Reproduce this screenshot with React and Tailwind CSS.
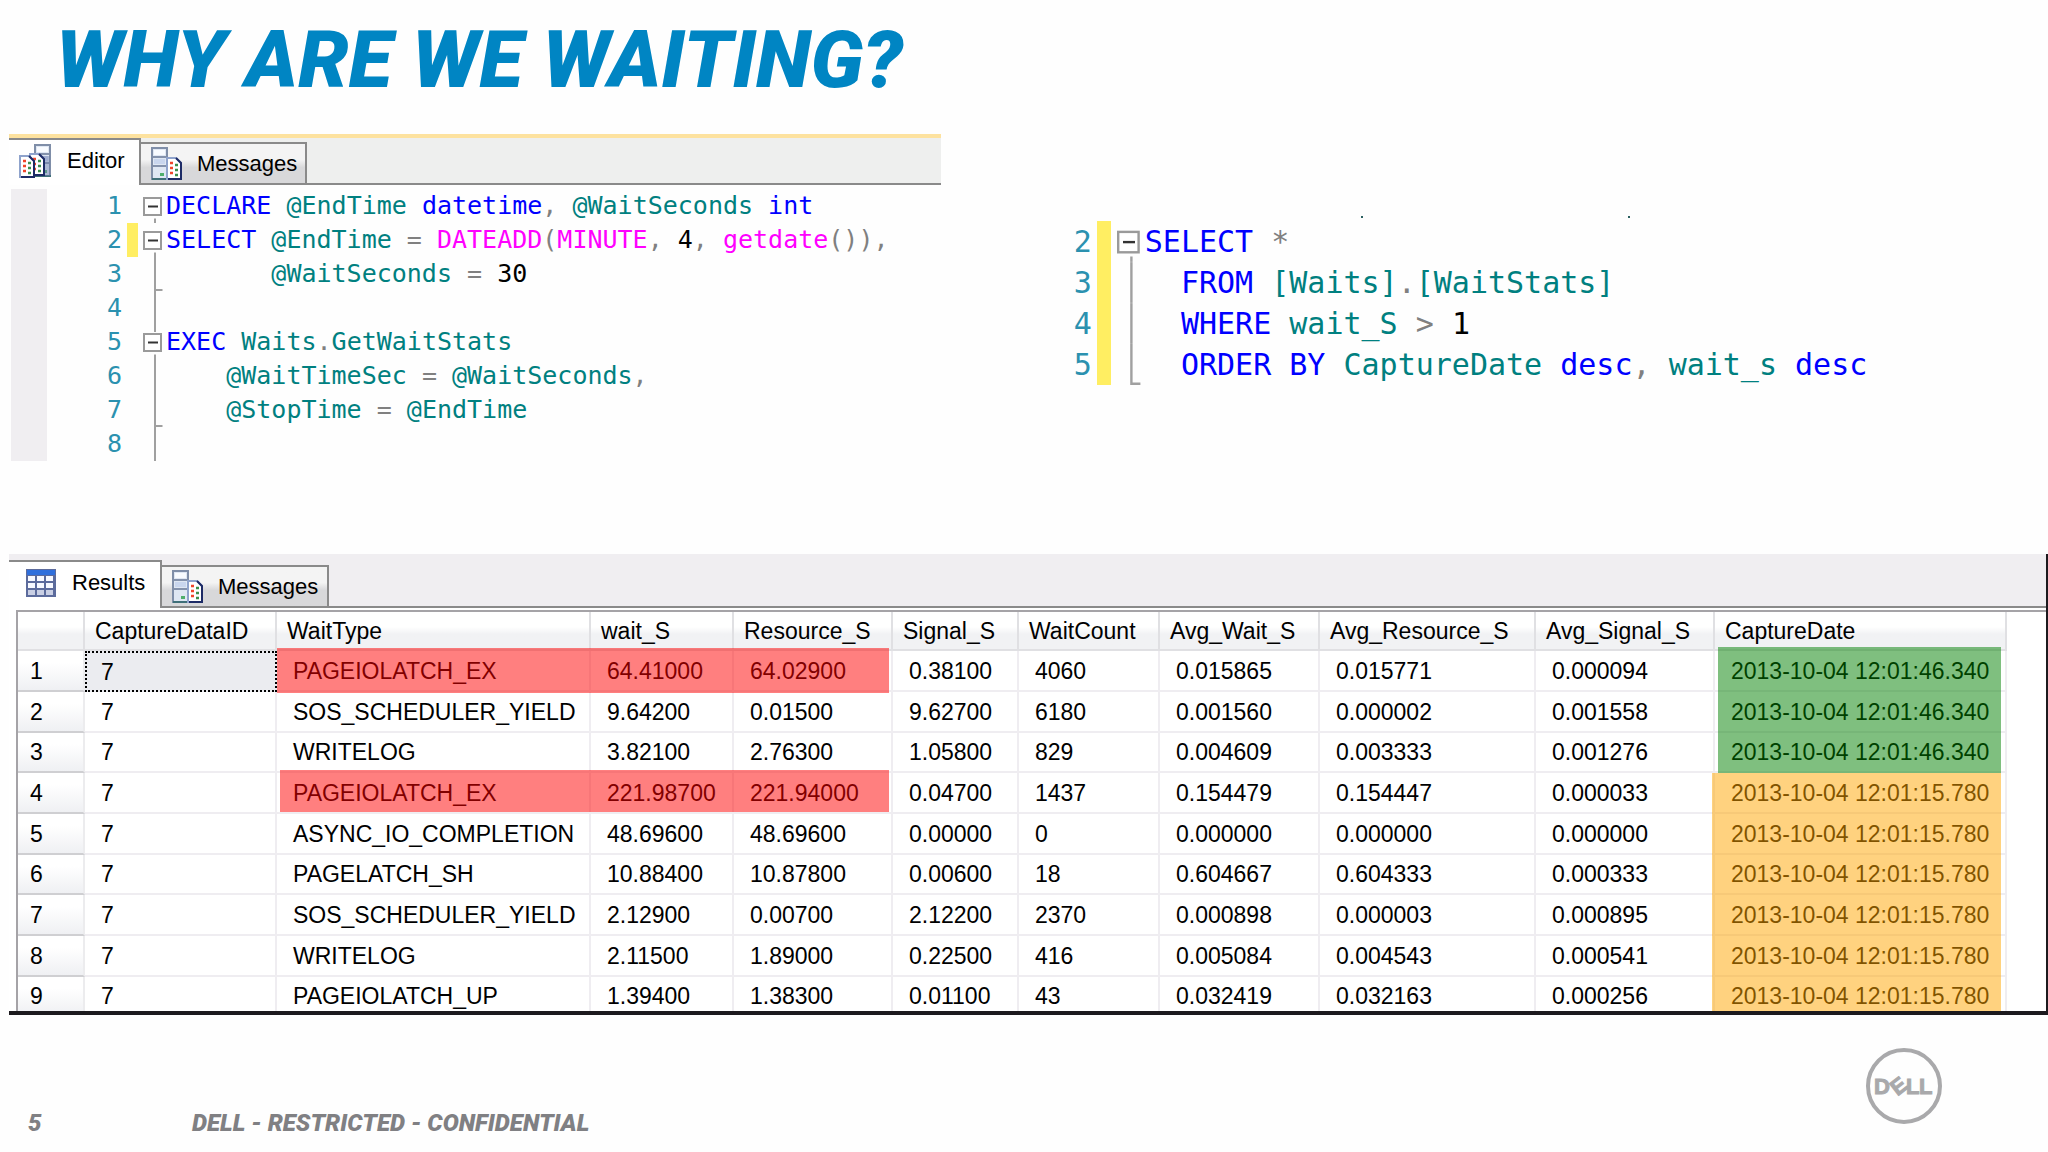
import React from 'react';
import clsx from 'clsx';

// token colours used by the SQL editor
const kw = 'text-[#0000ff]';
const id = 'text-[#008080]';
const fn = 'text-[#ff00ff]';
const op = 'text-[#808080]';
const num = 'text-black';

const waitScript = [
  { no: 1, fold: 'open', code: [[kw, 'DECLARE '], [id, '@EndTime '], [kw, 'datetime'], [op, ', '], [id, '@WaitSeconds '], [kw, 'int']] },
  { no: 2, fold: 'open', changed: true, code: [[kw, 'SELECT '], [id, '@EndTime '], [op, '= '], [fn, 'DATEADD'], [op, '('], [fn, 'MINUTE'], [op, ', '], [num, '4'], [op, ', '], [fn, 'getdate'], [op, '()),']] },
  { no: 3, fold: 'tick', code: [[id, '       @WaitSeconds '], [op, '= '], [num, '30']] },
  { no: 4, fold: 'line', code: [] },
  { no: 5, fold: 'nested', code: [[kw, 'EXEC '], [id, 'Waits'], [op, '.'], [id, 'GetWaitStats']] },
  { no: 6, fold: 'line', code: [[id, '    @WaitTimeSec '], [op, '= '], [id, '@WaitSeconds'], [op, ',']] },
  { no: 7, fold: 'tick', code: [[id, '    @StopTime '], [op, '= '], [id, '@EndTime']] },
  { no: 8, fold: 'line', code: [] },
];

const waitQuery = [
  { no: 2, fold: 'open', changed: true, code: [[kw, 'SELECT '], [op, '*']] },
  { no: 3, fold: 'line', changed: true, code: [[kw, '  FROM '], [id, '[Waits]'], [op, '.'], [id, '[WaitStats]']] },
  { no: 4, fold: 'line', changed: true, code: [[kw, '  WHERE '], [id, 'wait_S '], [op, '> '], [num, '1']] },
  { no: 5, fold: 'tick', changed: true, code: [[kw, '  ORDER BY '], [id, 'CaptureDate '], [kw, 'desc'], [op, ', '], [id, 'wait_s '], [kw, 'desc']] },
];

const columns = [
  'CaptureDataID', 'WaitType', 'wait_S', 'Resource_S', 'Signal_S', 'WaitCount',
  'Avg_Wait_S', 'Avg_Resource_S', 'Avg_Signal_S', 'CaptureDate',
];

const late = '2013-10-04 12:01:46.340';
const early = '2013-10-04 12:01:15.780';

const rows = [
  ['7', 'PAGEIOLATCH_EX', '64.41000', '64.02900', '0.38100', '4060', '0.015865', '0.015771', '0.000094', late],
  ['7', 'SOS_SCHEDULER_YIELD', '9.64200', '0.01500', '9.62700', '6180', '0.001560', '0.000002', '0.001558', late],
  ['7', 'WRITELOG', '3.82100', '2.76300', '1.05800', '829', '0.004609', '0.003333', '0.001276', late],
  ['7', 'PAGEIOLATCH_EX', '221.98700', '221.94000', '0.04700', '1437', '0.154479', '0.154447', '0.000033', early],
  ['7', 'ASYNC_IO_COMPLETION', '48.69600', '48.69600', '0.00000', '0', '0.000000', '0.000000', '0.000000', early],
  ['7', 'PAGELATCH_SH', '10.88400', '10.87800', '0.00600', '18', '0.604667', '0.604333', '0.000333', early],
  ['7', 'SOS_SCHEDULER_YIELD', '2.12900', '0.00700', '2.12200', '2370', '0.000898', '0.000003', '0.000895', early],
  ['7', 'WRITELOG', '2.11500', '1.89000', '0.22500', '416', '0.005084', '0.004543', '0.000541', early],
  ['7', 'PAGEIOLATCH_UP', '1.39400', '1.38300', '0.01100', '43', '0.032419', '0.032163', '0.000256', early],
];

const Server = () => (
  <>
    <rect x="1" y="1" width="15" height="31" fill="#dfe7f3" stroke="#7f8ea8" strokeWidth="2" />
    <rect x="3" y="3" width="11" height="5" fill="#f8fbff" />
    <path d="M2 10h13M2 19h13" stroke="#8492ac" strokeWidth="2" />
    <rect x="3" y="12" width="11" height="5" fill="#c9d6ee" />
    <rect x="9" y="26" width="4" height="3" fill="#4fae6c" />
    <path d="M1 32h16" stroke="#3f6f78" strokeWidth="2" />
  </>
);

const Sheet = () => (
  <>
    <path d="M1 1h9l5 5v16H1z" fill="#fff" stroke="#8fa3cc" strokeWidth="2" />
    <path d="M10 1l5 5v16H2" fill="none" stroke="#1d2b66" strokeWidth="2" />
    <path d="M4 6h3M4 11h3M4 16h3" stroke="#f0452a" strokeWidth="2.5" />
    <path d="M9 8h3M9 13h3M9 18h3" stroke="#3c8f4b" strokeWidth="2.5" />
  </>
);

const MessagesIcon = () => (
  <svg className="h-[34px] w-8 shrink-0" viewBox="0 0 32 34" aria-hidden="true">
    <Server />
    <g transform="translate(15 10)"><Sheet /></g>
  </svg>
);

const EditorIcon = () => (
  <svg className="h-[34px] w-8 shrink-0" viewBox="0 0 32 34" aria-hidden="true">
    <g transform="translate(15 0)"><Server /></g>
    <path d="M16 12h15v20H16z" fill="#6f7fae" opacity="0.45" />
    <g transform="translate(10 9)"><Sheet /></g>
    <g transform="translate(0 11)"><Sheet /></g>
  </svg>
);

const GridIcon = () => (
  <svg className="h-7 w-[30px] shrink-0" viewBox="0 0 30 28" aria-hidden="true">
    <rect width="30" height="28" fill="#5c6b9c" />
    <rect x="1" y="1" width="28" height="5" fill="#2f6fdc" />
    {[7, 14, 21].map((y) => [2, 11, 20].map((x) => (
      <rect key={`${x}-${y}`} x={x} y={y} width="7" height="5" fill={y === 21 ? '#c9cfe4' : '#f7f9ff'} />
    )))}
  </svg>
);

const FoldMark = ({ type, className }) => (
  <svg className={className} viewBox="0 0 20 34" aria-hidden="true">
    {type === 'open' || type === 'nested' ? (
      <>
        {type === 'nested' && <path d="M12 0V7" stroke="#a0a0a0" strokeWidth="2" />}
        <rect x="1" y="9" width="17" height="17" fill="#fff" stroke="#9a9a9a" strokeWidth="2" />
        <path d="M5 17.5h10" stroke="#333" strokeWidth="2" />
        <path d="M12 29.5V34" stroke="#a0a0a0" strokeWidth="2" />
      </>
    ) : (
      <path d={type === 'tick' ? 'M12 0V34M12 33H19.5' : 'M12 0V34'} stroke="#a0a0a0" strokeWidth="2" fill="none" />
    )}
  </svg>
);

const CodeLine = ({ line, large }) => (
  <div className={clsx('flex items-center', large ? 'h-[41px]' : 'h-[34px]')}>
    <span className={clsx('text-right text-[#2b91af]', large ? 'w-[19px]' : 'w-[75px]')}>{line.no}</span>
    <span className={clsx('h-full shrink-0', large ? 'ml-[5px] w-[14px]' : 'ml-[5px] w-[11px]', line.changed && 'bg-[#ffee62]')} />
    <FoldMark type={line.fold} className={clsx('h-full shrink-0', large ? 'ml-1.5 w-6' : 'ml-[5px] w-5')} />
    <code className={clsx('whitespace-pre font-[inherit]', large ? 'ml-1' : 'ml-[3px]')}>
      {line.code.map(([color, text], i) => (
        <span key={i} className={color}>{text}</span>
      ))}
    </code>
  </div>
);

const TabStrip = ({ icon, label, activeClass, messagesClass, stripClass }) => (
  <div className={clsx('flex font-["Liberation_Sans",sans-serif] text-[22px] leading-8', stripClass)}>
    <button className={clsx('flex items-center border-t-2 border-r-2 border-[#8a8a8a] bg-white pb-1', activeClass)}>
      {icon}
      {label}
    </button>
    <div className="flex flex-1 items-end border-b-2 border-[#8a8a8a]">
      <button className={clsx('flex h-[41px] items-center border-t-2 border-r-2 border-[#8a8a8a] bg-linear-to-b from-[#f4f4f4] from-40% to-[#d8d8da] to-60%', messagesClass)}>
        <MessagesIcon />
        Messages
      </button>
    </div>
  </div>
);

const DellLogo = () => (
  <svg className="h-[78px] w-[78px] not-italic" viewBox="0 0 78 78" role="img" aria-label="Dell">
    <circle cx="39" cy="39" r="36" fill="none" stroke="#a9a9ab" strokeWidth="4" />
    <g fill="#a9a9ab" stroke="#a9a9ab" strokeWidth="1" className='font-["Liberation_Sans",sans-serif] text-[22px] font-bold'>
      <text x="9" y="47">D</text>
      <text x="-7" y="8" transform="translate(33 39) rotate(-38)">E</text>
      <text x="41" y="47">L</text>
      <text x="54" y="47">L</text>
    </g>
  </svg>
);

export default function App() {
  return (
    <div className="flex min-h-screen flex-col bg-[#fefefe] text-black">
      <header className="h-[134px] pt-3 pl-14">
        <h1 className="font-[Roboto,sans-serif] text-[80px] leading-[96px] font-black text-[#0085c3] italic">WHY ARE WE WAITING?</h1>
      </header>

      {/* Scripts */}
      <div className="grid h-[420px] grid-cols-[457fr_543fr] pl-[9px]">
        <section>
          <div className="border-t-4 border-[#fde29f] bg-[#eeefee]">
            <TabStrip
              icon={<EditorIcon />}
              label="Editor"
              stripClass="h-[47px]"
              activeClass="w-[132px] gap-4 pl-2.5"
              messagesClass="w-[166px] gap-3.5 pl-2.5"
            />
          </div>
          <div className='mt-1 flex font-["DejaVu_Sans_Mono",monospace] text-[25px] leading-8'>
            <div className="ml-0.5 w-9 bg-[#f0eef1]" />
            <div>
              {waitScript.map((line) => <CodeLine key={line.no} line={line} />)}
            </div>
          </div>
        </section>
        <section className='pt-[82px] pl-[132px] font-["DejaVu_Sans_Mono",monospace] text-[30px] leading-10'>
          {/* tails of the clipped line above */}
          <div className="flex h-[5px] pl-[288px]">
            <span className="h-0.5 w-0.5 bg-[#2b6060]" />
            <span className="ml-[265px] h-0.5 w-0.5 bg-[#2b6060]" />
          </div>
          {waitQuery.map((line) => <CodeLine key={line.no} line={line} large />)}
        </section>
      </div>

      {/* Results */}
      <section className="ml-[9px] h-[461px] overflow-hidden border-r-2 border-b-4 border-[#1c1a1e] bg-[#f0eef1]">
        <TabStrip
          icon={<GridIcon />}
          label="Results"
          stripClass="mt-1.5 h-12"
          activeClass="w-[153px] gap-4 pl-[17px]"
          messagesClass="w-[167px] gap-3.5 pl-2.5"
        />
        <div className="bg-white pt-0.5 pl-[7px]">
          <div className='relative border-t-2 border-l-2 border-[#a5a3a7] font-["Liberation_Sans",sans-serif] text-[23px] leading-8 whitespace-nowrap'>
            <table className="w-full table-fixed border-separate border-spacing-0 text-left">
              <colgroup>
                <col className="w-[67px]" />
                <col className="w-[192px]" />
                <col className="w-[314px]" />
                <col className="w-[143px]" />
                <col className="w-[159px]" />
                <col className="w-[126px]" />
                <col className="w-[141px]" />
                <col className="w-[160px]" />
                <col className="w-[216px]" />
                <col className="w-[179px]" />
                <col className="w-[292px]" />
                <col />
              </colgroup>
              <thead>
                <tr className="h-[39px]">
                  <th className="border-r-2 border-b-2 border-[#e0e0e3] bg-linear-to-b from-white from-40% to-[#f1f2f4] to-60%" />
                  {columns.map((name) => (
                    <th key={name} className="border-r-2 border-b-2 border-[#e0e0e3] bg-linear-to-b from-white from-40% to-[#f1f2f4] to-60% p-0 pl-2.5 font-normal">{name}</th>
                  ))}
                  <th />
                </tr>
              </thead>
              <tbody>
                {rows.map((row, r) => (
                  <tr key={r} className="h-[41px] nth-[3n]:h-10">
                    <th className="border-r-2 border-b-2 border-r-[#ececee] border-b-[#cfcfd2] bg-linear-to-b from-white from-30% to-[#eff0f3] p-0 pl-3 font-normal">{r + 1}</th>
                    {row.map((cell, c) => (
                      <td
                        key={c}
                        className={clsx(
                          'p-0',
                          r === 0 && c === 0
                            ? 'border-2 border-dotted border-black bg-[#ebecf0] pl-3.5'
                            : 'border-r-2 border-b-2 border-[#efedf1] pl-4',
                        )}
                      >
                        {cell}
                      </td>
                    ))}
                    <td />
                  </tr>
                ))}
              </tbody>
            </table>

            {/* Highlighter boxes over the grid */}
            <div className="absolute top-9 left-[259px] h-[45px] w-[612px] bg-[#ff0000]/50" />
            <div className="absolute top-[158px] left-[262px] h-[42px] w-[609px] bg-[#ff0000]/50" />
            <div className="absolute top-[35px] left-[1700px] h-[126px] w-[283px] bg-[#008000]/50" />
            <div className="absolute top-[161px] left-[1694px] h-[250px] w-[289px] bg-[#ffa500]/50" />
          </div>
        </div>
      </section>

      <footer className="flex flex-1 items-start pl-7 font-[Roboto,sans-serif] text-[24px] leading-8 font-black text-[#808083] italic">
        <span className="w-[164px] pt-[92px]">5</span>
        <span className="flex-1 pt-[92px]">DELL - RESTRICTED - CONFIDENTIAL</span>
        <div className="pt-8 pr-[105px]">
          <DellLogo />
        </div>
      </footer>
    </div>
  );
}
